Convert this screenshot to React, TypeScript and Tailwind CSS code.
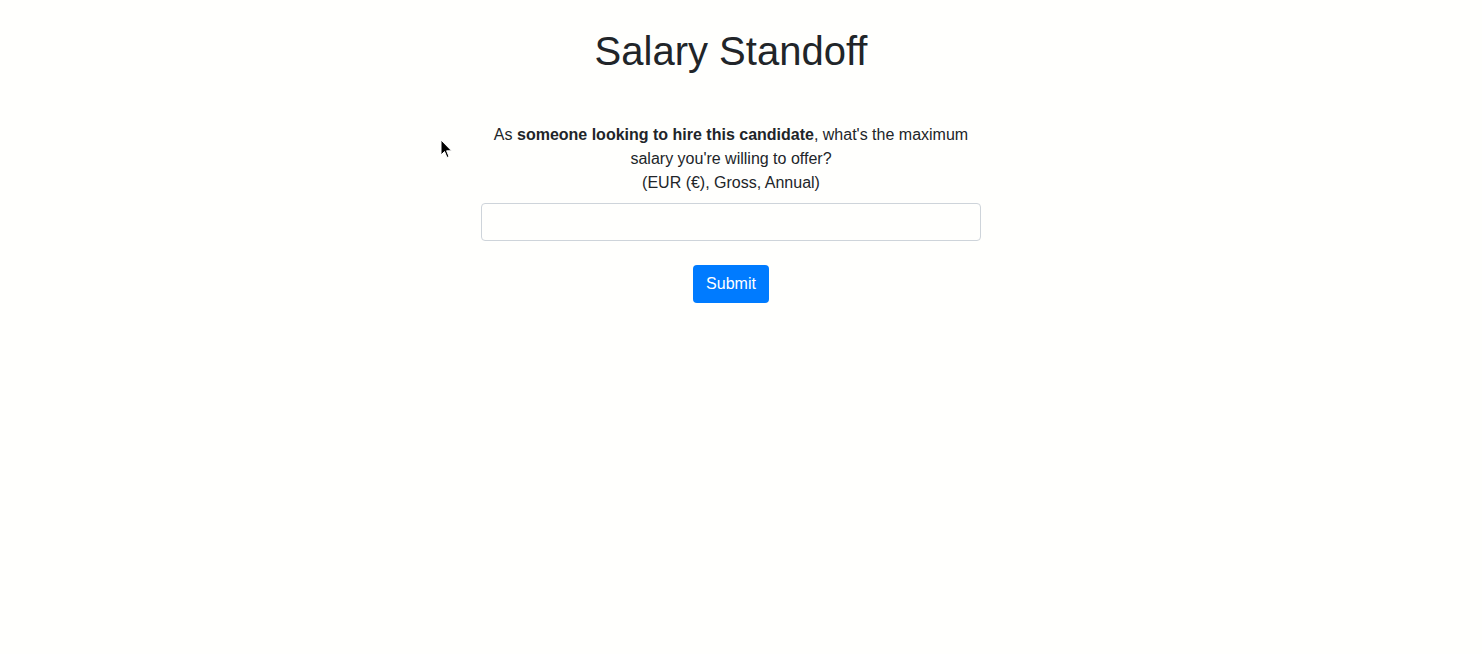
const Cursor = () => (
  <svg
    className="absolute left-[440px] top-[139px]"
    width="14"
    height="22"
    viewBox="0 0 14 22"
  >
    <path
      d="M1 1 L1 16 L4.5 12.5 L7 18.5 L9 17.6 L6.6 11.8 L11.5 11.8 Z"
      fill="#000"
      stroke="#fff"
      strokeWidth="1"
      strokeLinejoin="round"
    />
  </svg>
);

const App = () => {
  return (
    <div className="relative min-h-[654px] w-full bg-[#fffffd] font-['Liberation_Sans',Arial,sans-serif] text-[#212529]">
      <div className="flex flex-col items-center pr-[20px] pt-[27px]">
        <h1 className="text-[40px] leading-[48px] font-normal">Salary Standoff</h1>

        <div className="mt-[48px] w-[500px] flex flex-col items-center">
          <p className="text-center text-base leading-6 px-3">
            As <span className="font-bold">someone looking to hire this candidate</span>, what's the maximum
            salary you're willing to offer?
            <br />
            (EUR (€), Gross, Annual)
          </p>
          <input
            type="text"
            className="mt-[8px] w-full h-[38px] rounded-[4px] border border-[#ced4da] bg-[#fffffd] px-3 text-base outline-none"
          />
          <button
            type="button"
            className="mt-6 h-[38px] w-[76px] rounded-[4px] bg-[#007bff] text-base text-white"
          >
            Submit
          </button>
        </div>
      </div>
      <Cursor />
    </div>
  );
};

export default App;
